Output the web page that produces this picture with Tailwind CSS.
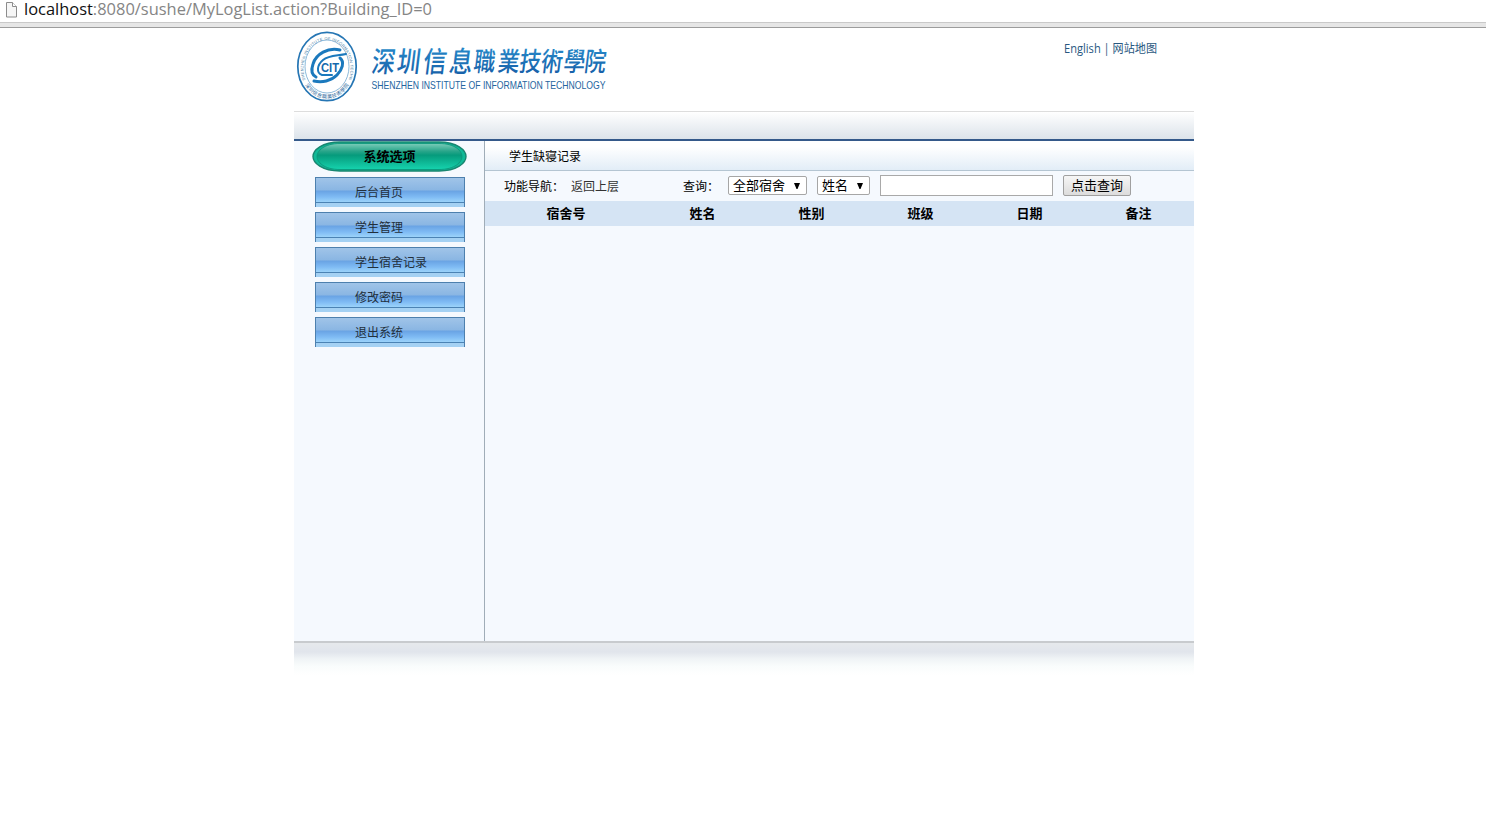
<!DOCTYPE html>
<html lang="zh-CN">
<head>
<meta charset="utf-8">
<title>学生缺寝记录</title>
<script src="https://cdn.jsdelivr.net/npm/@tailwindcss/browser@4"></script>
</head>
<body class="h-[823px] overflow-hidden bg-white font-['Liberation_Sans','Noto_Sans_CJK_SC',sans-serif] text-[12px] leading-[18px] text-black">
<div class="flex h-[22px] items-start pl-[6px]">
  <svg class="mt-[2px] h-[16px] w-[12px] shrink-0" viewBox="0 0 12 16" fill="#f6f6f6" stroke="#8c8c8c"><path d="M.5 .5h6l4 4v10.500h-10z"/><path d="M6.500 .5v4h4" fill="#fff"/></svg>
  <svg class="ml-[6px] h-[22px] w-[440px] overflow-visible"><text x="0" y="15" font-family="Open Sans" font-size="16" textLength="408" lengthAdjust="spacingAndGlyphs" fill="#858585"><tspan fill="#111">localhost</tspan>:8080/sushe/MyLogList.action?Building_ID=0</text></svg>
</div>
<div class="h-[6px] border-t border-b border-t-[#c9c9c9] border-b-[#9c9c9c] bg-[#e6e6e6]"></div>

<div class="ml-[294px] w-[900px]">
  <header class="flex h-[83px] justify-between">
    <svg class="h-[83px] w-[330px] overflow-visible" viewBox="294 28 330 83">
      <defs>
        <path id="ringTop" d="M305.500 80 A23.500 28.500 0 1 1 348.500 80"/>
        <path id="ringBottom" d="M304 83 Q313 98.500 327 98.500 Q341 98.500 350 83"/>
        <linearGradient id="ink" x1="0" y1="0" x2="0" y2="1"><stop offset="0" stop-color="#2a93d2"/><stop offset="1" stop-color="#1558a2"/></linearGradient>
      </defs>
      <g fill="none" stroke="#2676b4">
        <ellipse cx="327" cy="66.500" rx="29.200" ry="34.200" stroke-width="1.700"/>
        <ellipse cx="327" cy="66.500" rx="22" ry="26.500" stroke="#5b9bc9" stroke-width=".7"/>
      </g>
      <text font-family="Liberation Sans" font-size="4" fill="#4b7fa8"><textPath href="#ringTop" textLength="120">SHENZHEN INSTITUTE OF INFORMATION TECHNOLOGY</textPath></text>
      <text font-family="Noto Sans CJK SC" font-size="5" fill="#235f97"><textPath href="#ringBottom" startOffset="2" textLength="54">深圳信息職業技術學院</textPath></text>
      <g fill="none" stroke="#1b79bd" stroke-linecap="round">
        <path d="M340 50C328 47 316 54 313 64C311 70 312 75 316 77" stroke-width="3"/>
        <path d="M346 54C337 56 329 55 323 60C317 65 316 73 322 75H332" stroke-width="2"/>
        <path d="M340 58C345 62 342 70 337 75C331 81 322 83 314 81" stroke-width="3"/>
      </g>
      <text x="321" y="72" font-family="Liberation Sans" font-size="12.500" font-weight="bold" textLength="18" lengthAdjust="spacingAndGlyphs" fill="#1469ad">CIT</text>
      <g transform="translate(371 71) skewX(-7) scale(.9 1.1)" font-family="Noto Sans CJK SC" font-weight="500" fill="url(#ink)">
        <text font-size="26" y="1" x="0 28 57 86">深圳信息</text>
        <text font-size="24" y="0" x="113 140 164 188 213 236">職業技術學院</text>
      </g>
      <text x="371.500" y="89" font-family="Liberation Sans" font-size="10.500" textLength="234" lengthAdjust="spacingAndGlyphs" fill="#2465a0">SHENZHEN INSTITUTE OF INFORMATION TECHNOLOGY</text>
    </svg>
    <svg class="h-[50px] w-[130px] overflow-visible" viewBox="1064 28 130 50"><text x="1064" y="53" font-family="Open Sans, Noto Sans CJK SC" font-size="12" textLength="93" lengthAdjust="spacingAndGlyphs" fill="#285780">English | 网站地图</text></svg>
  </header>
  <div class="h-[30px] border-t border-b-2 border-t-[#dddddd] border-b-[#34598a] bg-gradient-to-b from-white to-[#dce3ea]"></div>

  <div class="flex h-[500px] bg-[#f5f9fe]">
    <aside class="w-[191px] shrink-0 border-r border-[#a0adb8] pl-[18px]">
      <svg class="block h-[31px] w-[155px]" viewBox="0 0 155 31">
        <defs>
          <linearGradient id="pill" x1="0" y1="0" x2="0" y2="1"><stop offset="0" stop-color="#7bccb9"/><stop offset=".3" stop-color="#28a58a"/><stop offset=".45" stop-color="#069b7c"/><stop offset="1" stop-color="#16d3ae"/></linearGradient>
        </defs>
        <path d="M28 1H127C145 1 154 9 154 15.500S145 30 127 30H28C10 30 1 22 1 15.500S10 1 28 1Z" fill="#10b997" stroke="#198570" stroke-width="1.400"/>
        <path d="M28 2.500H127C143 2.500 150 10 150 15.500S143 28.500 127 28.500H28C12 28.500 5 21 5 15.500S12 2.500 28 2.500Z" fill="url(#pill)" stroke="#0b9277" stroke-width=".8"/>
        <text x="51.500" y="19.500" font-family="Noto Sans CJK SC" font-size="13" font-weight="bold">系统选项</text>
      </svg>
      <nav class="ml-[3px] mt-[5px] flex w-[150px] flex-col gap-[5px] text-[#222f3b]">
        <div class="h-[30px] border-x border-t border-[#4d80ae] bg-[linear-gradient(#a0c4e8_0,#8ab6e3_12px,#69a3e4_13px,#7fbbf4_19px,#9bd3fa_24px,#4b83b4_24px,#4b83b4_25px,#a4d1f3_25px)] pl-[39px] pt-[6px]">后台首页</div>
        <div class="h-[30px] border-x border-t border-[#4d80ae] bg-[linear-gradient(#a0c4e8_0,#8ab6e3_12px,#69a3e4_13px,#7fbbf4_19px,#9bd3fa_24px,#4b83b4_24px,#4b83b4_25px,#a4d1f3_25px)] pl-[39px] pt-[6px]">学生管理</div>
        <div class="h-[30px] border-x border-t border-[#4d80ae] bg-[linear-gradient(#a0c4e8_0,#8ab6e3_12px,#69a3e4_13px,#7fbbf4_19px,#9bd3fa_24px,#4b83b4_24px,#4b83b4_25px,#a4d1f3_25px)] pl-[39px] pt-[6px]">学生宿舍记录</div>
        <div class="h-[30px] border-x border-t border-[#4d80ae] bg-[linear-gradient(#a0c4e8_0,#8ab6e3_12px,#69a3e4_13px,#7fbbf4_19px,#9bd3fa_24px,#4b83b4_24px,#4b83b4_25px,#a4d1f3_25px)] pl-[39px] pt-[6px]">修改密码</div>
        <div class="h-[30px] border-x border-t border-[#4d80ae] bg-[linear-gradient(#a0c4e8_0,#8ab6e3_12px,#69a3e4_13px,#7fbbf4_19px,#9bd3fa_24px,#4b83b4_24px,#4b83b4_25px,#a4d1f3_25px)] pl-[39px] pt-[6px]">退出系统</div>
      </nav>
    </aside>
    <main class="w-[709px]">
      <div class="h-[30px] border-b border-[#b4c5d2] bg-gradient-to-b from-white from-20% to-[#e2edf7] pl-[24px] pt-[7px]">学生缺寝记录</div>
      <div class="flex h-[30px] items-center pb-[1px]">
        <span class="ml-[19px] w-[67px] pt-[3px]">功能导航：</span>
        <a class="w-[112px] pt-[3px] text-[#333]">返回上层</a>
        <span class="w-[45px] pt-[3px]">查询：</span>
        <div class="flex h-[19px] w-[79px] items-center justify-between rounded-[2px] border border-[#a6a6a6] bg-white pl-[4px] pr-[6px] text-[13px] leading-[17px]"><span>全部宿舍</span><svg class="h-[6px] w-[6px]" viewBox="0 0 6 6"><path d="M0 0h6L3.500 6h-1z"/></svg></div>
        <div class="ml-[10px] flex h-[19px] w-[53px] items-center justify-between rounded-[2px] border border-[#a6a6a6] bg-white pl-[4px] pr-[6px] text-[13px] leading-[17px]"><span>姓名</span><svg class="h-[6px] w-[6px]" viewBox="0 0 6 6"><path d="M0 0h6L3.500 6h-1z"/></svg></div>
        <input class="ml-[10px] h-[21px] w-[173px] border border-[#a9a9a9] bg-white" aria-label="查询">
        <button class="ml-[10px] h-[21px] w-[68px] whitespace-nowrap rounded-[2px] border border-[#a0a0a0] bg-gradient-to-b from-[#f6f6f6] to-[#dcdcdc] text-[13px] leading-[17px]">点击查询</button>
      </div>
      <div class="grid h-[25px] grid-cols-[163px_repeat(5,109px)] items-center bg-[#d5e4f4] text-center text-[13px] font-bold">
        <span class="pr-[1px]">宿舍号</span><span>姓名</span><span>性别</span><span>班级</span><span>日期</span><span>备注</span>
      </div>
    </main>
  </div>
  <footer class="h-[34px] border-t-2 border-[#c8cbce] bg-[linear-gradient(#e6e9ec_0,#e1e5ec_9px,#f0f4f6_16px,#f9fcfc_23px,#fff)]"></footer>
</div>
</body>
</html>
